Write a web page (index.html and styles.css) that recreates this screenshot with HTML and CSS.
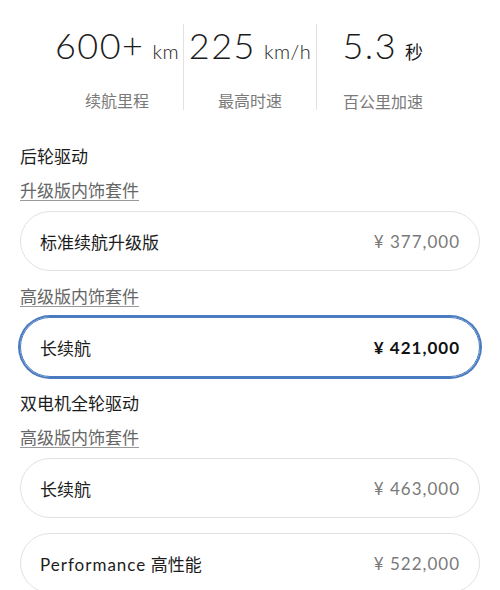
FILE: index.html
```html
<!DOCTYPE html>
<html lang="zh-CN">
<head>
    <meta charset="UTF-8">
    <meta name="viewport" content="width=device-width, initial-scale=1.0">
    <title>车型配置</title>
    <link rel="stylesheet" href="styles.css">
</head>
<body>
    <div class="stats">
        <div class="stat">
            <div class="value">600+<span class="unit">km</span></div>
            <div class="label">续航里程</div>
        </div>
        <div class="stat">
            <div class="value">225<span class="unit">km/h</span></div>
            <div class="label">最高时速</div>
        </div>
        <div class="stat">
            <div class="value">5.3<span class="unit unit-cn">秒</span></div>
            <div class="label">百公里加速</div>
        </div>
    </div>

    <div class="options">
        <div class="group">
            <h3 class="group-title">后轮驱动</h3>
            <a href="#" class="trim-link">升级版内饰套件</a>
            <div class="card">
                <span class="name">标准续航升级版</span>
                <span class="price">¥ 377,000</span>
            </div>
            <a href="#" class="trim-link">高级版内饰套件</a>
            <div class="card selected">
                <span class="name">长续航</span>
                <span class="price">¥ 421,000</span>
            </div>
        </div>

        <div class="group">
            <h3 class="group-title">双电机全轮驱动</h3>
            <a href="#" class="trim-link">高级版内饰套件</a>
            <div class="card">
                <span class="name">长续航</span>
                <span class="price">¥ 463,000</span>
            </div>
            <div class="card">
                <span class="name"><span class="latin">Performance</span> 高性能</span>
                <span class="price">¥ 522,000</span>
            </div>
        </div>
    </div>
</body>
</html>
```

FILE: styles.css
```css
:root {
    --text: #1c1c1c;
    --muted: #7a7a7a;
    --line: #e2e2e2;
    --blue: #4a7bc0;
    --font: Lato, "Noto Sans CJK SC", sans-serif;
}

body {
    margin: 0;
    background: #fff;
    font-family: var(--font);
    color: var(--text);
}

.stats {
    display: flex;
    margin-left: 51px;
    padding-top: 24px;
}

.stat {
    width: 132px;
    height: 86px;
    text-align: center;
}

.stat + .stat {
    border-left: 1px solid var(--line);
}

.value {
    padding-top: 3px;
    font-size: 36px;
    font-weight: 300;
    line-height: 36px;
    letter-spacing: 1.5px;
    color: #1a1a1a;
    white-space: nowrap;
}

.unit {
    margin-left: 8px;
    font-size: 20px;
    letter-spacing: 0.5px;
}

.unit-cn {
    font-size: 18px;
    font-weight: 400;
}

.label {
    margin-top: 22px;
    font-size: 16px;
    line-height: 20px;
    color: var(--muted);
}

.options {
    padding: 35px 20px 0;
}

.group {
    display: flex;
    flex-direction: column;
}

.group + .group {
    margin-top: 15px;
}

.group-title {
    margin: 0;
    font-size: 17px;
    font-weight: 400;
    line-height: 24px;
}

.trim-link {
    align-self: flex-start;
    margin-top: 10px;
    margin-bottom: 8px;
    font-size: 17px;
    line-height: 24px;
    color: #666;
    text-decoration: underline;
    text-underline-offset: 3px;
    text-decoration-color: #999;
}

.card + .trim-link {
    margin-top: 14px;
}

.card {
    display: flex;
    align-items: center;
    justify-content: space-between;
    height: 60px;
    box-sizing: border-box;
    padding: 0 19px;
    border: 1px solid var(--line);
    border-radius: 30px;
    font-size: 17px;
}

.card + .card {
    margin-top: 15px;
}

.latin {
    letter-spacing: 1px;
}

.card .price {
    color: var(--muted);
    letter-spacing: 1px;
}

.card.selected {
    border-color: var(--blue);
    box-shadow: 0 0 0 2px var(--blue);
}

.card.selected .price {
    color: #111;
    font-weight: 700;
}
```
